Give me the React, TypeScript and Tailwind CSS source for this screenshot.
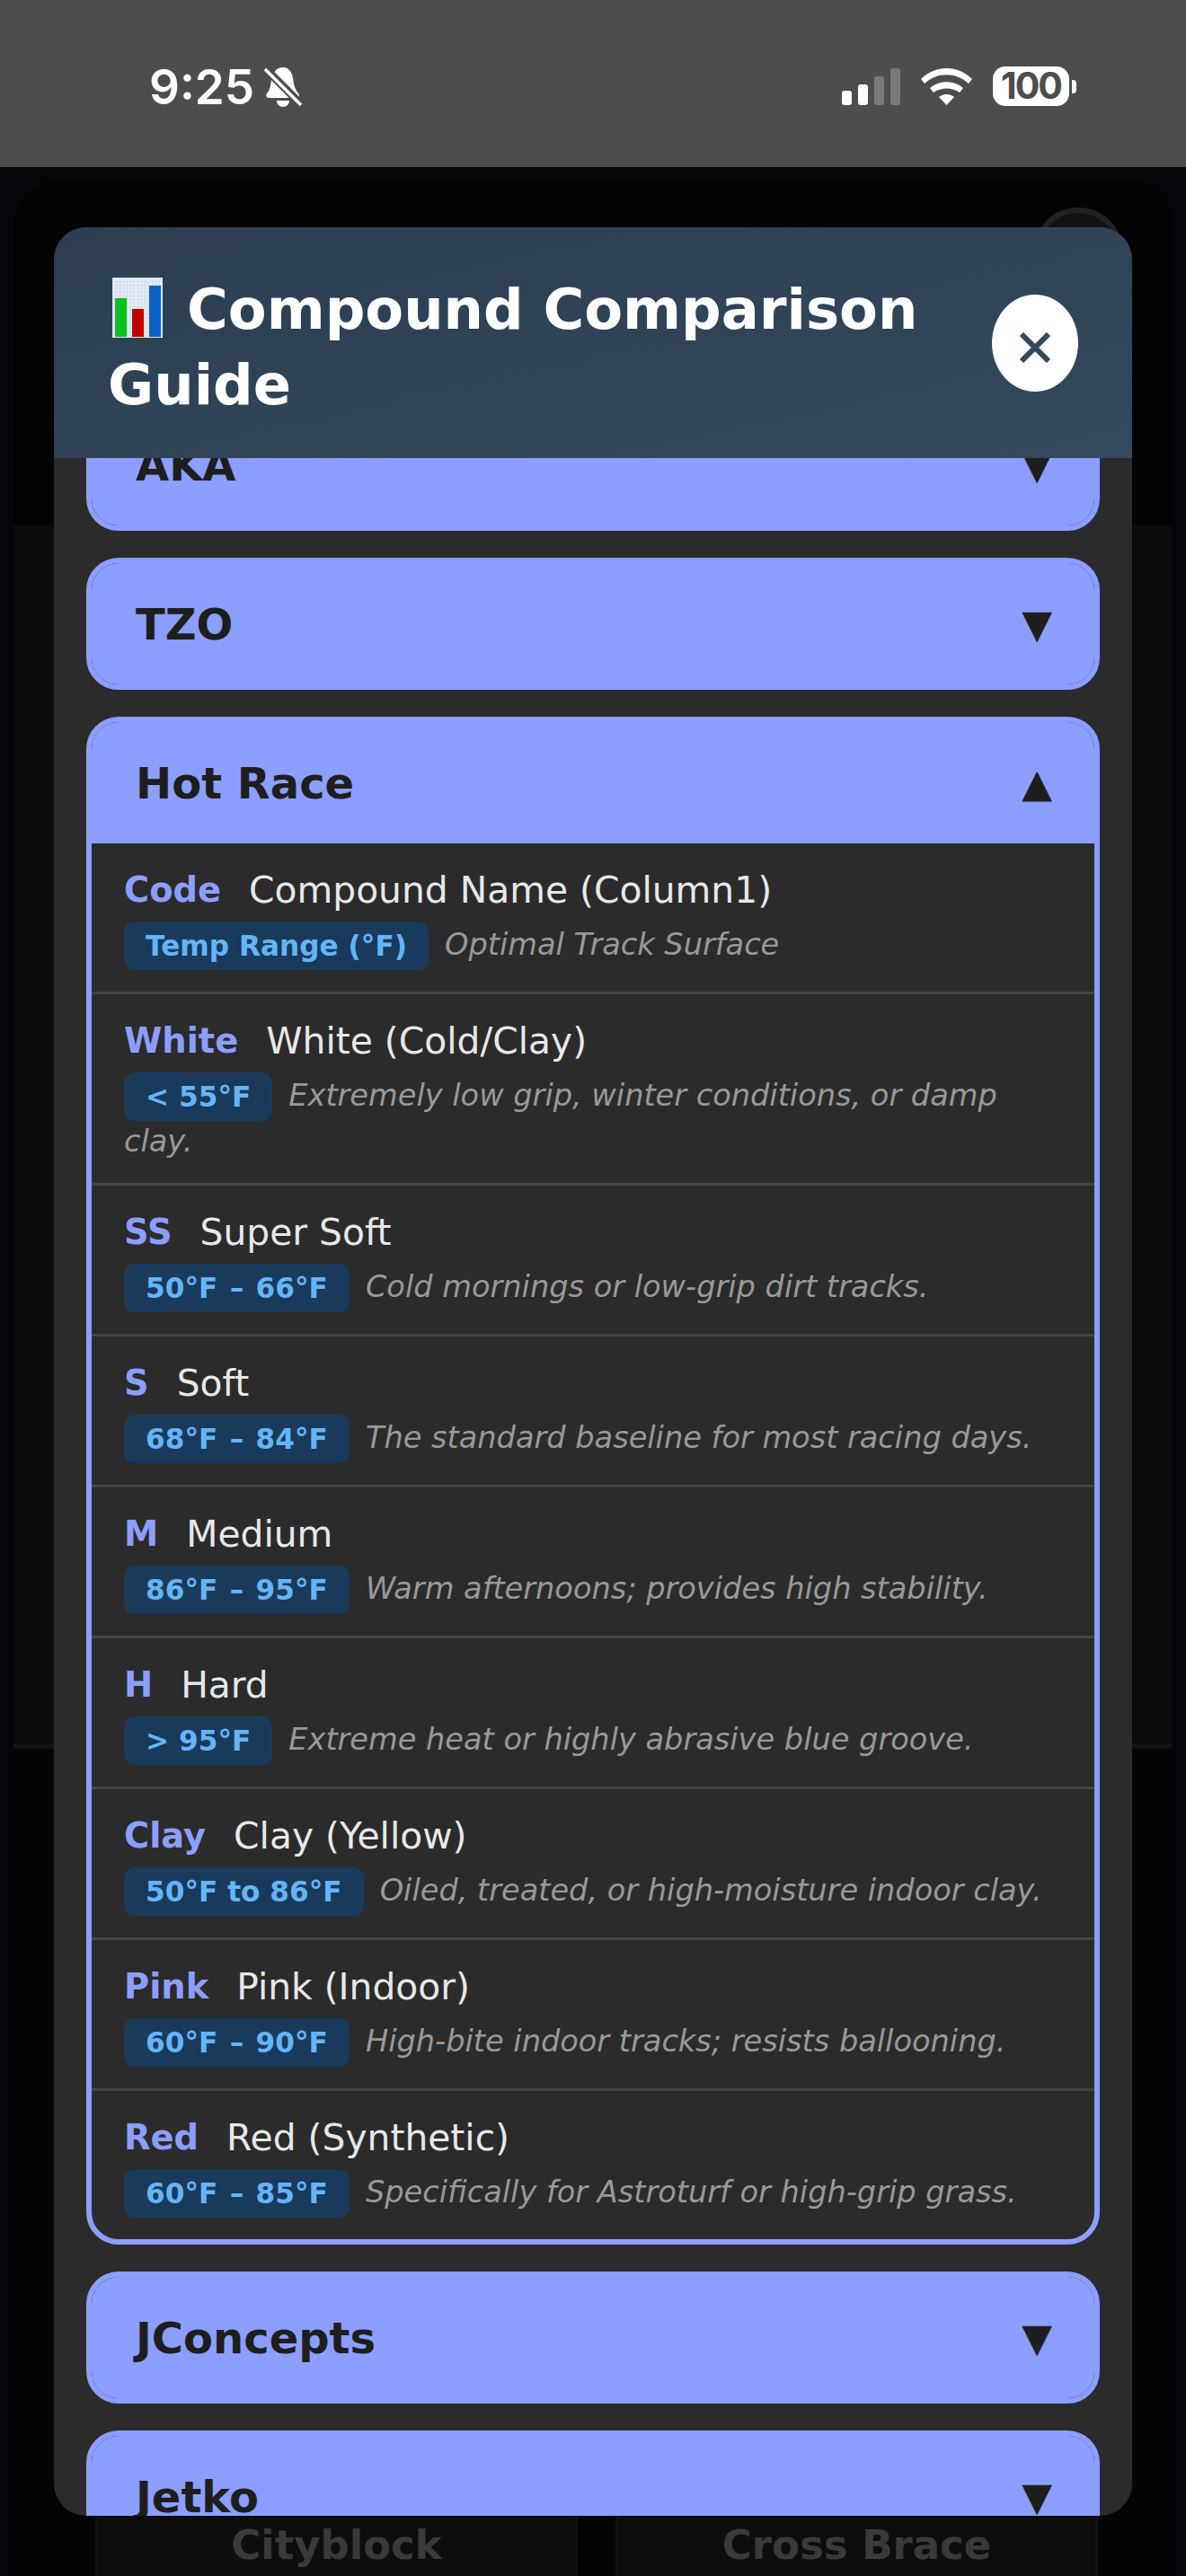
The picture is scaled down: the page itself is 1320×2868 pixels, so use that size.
const rows = [
  { code: 'Code', name: 'Compound Name (Column1)', temp: 'Temp Range (°F)', note: 'Optimal Track Surface' },
  { code: 'White', name: 'White (Cold/Clay)', temp: '< 55°F', note: 'Extremely low grip, winter conditions, or damp clay.' },
  { code: 'SS', name: 'Super Soft', temp: '50°F – 66°F', note: 'Cold mornings or low-grip dirt tracks.' },
  { code: 'S', name: 'Soft', temp: '68°F – 84°F', note: 'The standard baseline for most racing days.' },
  { code: 'M', name: 'Medium', temp: '86°F – 95°F', note: 'Warm afternoons; provides high stability.' },
  { code: 'H', name: 'Hard', temp: '> 95°F', note: 'Extreme heat or highly abrasive blue groove.' },
  { code: 'Clay', name: 'Clay (Yellow)', temp: '50°F to 86°F', note: 'Oiled, treated, or high-moisture indoor clay.' },
  { code: 'Pink', name: 'Pink (Indoor)', temp: '60°F – 90°F', note: 'High-bite indoor tracks; resists ballooning.' },
  { code: 'Red', name: 'Red (Synthetic)', temp: '60°F – 85°F', note: 'Specifically for Astroturf or high-grip grass.' },
]

function StatusBar() {
  return (
    <div className="flex h-[186px] shrink-0 items-start justify-between bg-[#4d4d4d] pl-[166px] pr-[122px] pt-[74px] text-white">
      <div className="flex items-center gap-[10px]">
        <span className="font-['Inter',sans-serif] text-[53px] font-semibold leading-[46px]">9:25</span>
        <svg width="44" height="46" viewBox="0 0 44 46" fill="white">
          <path d="M22 1c7 0 10 6 11 12 1 7 2 12 6 17 2 3 1 5-2 5H7c-3 0-5-2-3-5 4-4 4-9 5-15 1-8 6-14 13-14z" />
          <path d="M15 38h14c0 4-3 7-7 7s-7-3-7-7z" />
          <path d="M0 0 44 44" stroke="#4d4d4d" strokeWidth="9" />
          <path d="M2 3 42 43" stroke="white" strokeWidth="3.5" />
        </svg>
      </div>
      <div className="flex items-center">
        <div className="flex items-end gap-[7px]">
          <div className="h-[16px] w-[11px] rounded-[3px] bg-white" />
          <div className="h-[23px] w-[11px] rounded-[3px] bg-white" />
          <div className="h-[32px] w-[11px] rounded-[3px] bg-[#7a7a7a]" />
          <div className="h-[41px] w-[11px] rounded-[3px] bg-[#7a7a7a]" />
        </div>
        <svg className="ml-[23px]" width="57" height="42" viewBox="0 0 57 42" fill="white">
          <path d="M0 13C16-3 41-3 57 13l-4 5C39 5 18 5 4 18z" />
          <path d="M10 23c10-9 27-9 37 0l-4 5c-8-6-21-6-29 0z" />
          <path d="M20 33c5-4 12-4 17 0l-8.500 9z" />
        </svg>
        <div className="ml-[23px] flex h-[44px] w-[85px] items-center justify-center rounded-[14px] bg-white font-['Inter',sans-serif] text-[41px] font-bold tracking-[-2px] text-[#4d4d4d]">
          100
        </div>
        <div className="ml-[3px] h-[15px] w-[5px] rounded-r-[4px] bg-white" />
      </div>
    </div>
  )
}

function Backdrop() {
  return (
    <div className="flex min-h-0 flex-1 flex-col bg-[#05050a] px-[15px] pt-[14px]">
      <div className="flex flex-1 flex-col overflow-hidden rounded-t-[54px] bg-[#030303]">
        <div className="flex h-[385px] shrink-0 justify-end pr-[55px] pt-[31px]">
          <div className="h-[100px] w-[100px] rounded-full border-[6px] border-[#222222] bg-[#111111]" />
        </div>
        <div className="h-[1362px] shrink-0 border-b-[6px] border-[#131313] bg-[#0b0b0b]" />
        <div className="flex flex-1 items-end justify-between bg-[#050505] pl-[91px] pr-[83px]">
          <div className="flex h-[130px] w-[537px] items-start justify-center rounded-t-[24px] border-[3px] border-b-0 border-[#121212] bg-[#0d0d0d] pt-[63px] font-['DejaVu_Sans',sans-serif] text-[45px] font-bold leading-[60px] text-[#3a3a3a]">
            Cityblock
          </div>
          <div className="flex h-[130px] w-[537px] items-start justify-center rounded-t-[24px] border-[3px] border-b-0 border-[#121212] bg-[#0d0d0d] pt-[63px] font-['DejaVu_Sans',sans-serif] text-[45px] font-bold leading-[60px] text-[#3a3a3a]">
            Cross Brace
          </div>
        </div>
      </div>
    </div>
  )
}

function ChartIcon() {
  return (
    <svg className="ml-[5px] mr-[27px] inline-block align-[-10px]" width="56" height="67" viewBox="0 0 56 67">
      <defs>
        <pattern id="chart-grid" width="4" height="4" patternUnits="userSpaceOnUse">
          <rect width="4" height="4" fill="#e4ebf3" />
          <path d="M0 0H4M0 0V4" stroke="#c5d6ea" strokeWidth="1" />
        </pattern>
      </defs>
      <rect width="56" height="67" fill="url(#chart-grid)" />
      <rect x="3" y="23" width="13" height="43" fill="#0cc21f" />
      <rect x="22" y="35" width="13" height="31" fill="#c00000" />
      <rect x="41" y="9" width="13" height="57" fill="#0a62c9" />
    </svg>
  )
}

function BrandHead({ name, open }: { name: string; open?: boolean }) {
  return (
    <div className="flex h-[135px] items-center justify-between bg-[#8c9eff] pl-[49px] pr-[47px] text-[#1e1e1e]">
      <span className="text-[48px] font-bold leading-none">{name}</span>
      <span className="text-[44px] leading-none">{open ? '▲' : '▼'}</span>
    </div>
  )
}

function Brand({ name }: { name: string }) {
  return (
    <div className="shrink-0 overflow-hidden rounded-[36px] border-[6px] border-[#8c9eff] bg-[#2b2b2b]">
      <BrandHead name={name} />
    </div>
  )
}

function Compound({ code, name, temp, note, last }: { code: string; name: string; temp: string; note: string; last?: boolean }) {
  return (
    <div className={last ? 'px-[36px] pb-[24px] pt-[22px]' : 'border-b-[3px] border-[#444444] px-[36px] pb-[24px] pt-[22px]'}>
      <div className="mb-[4px] flex h-[61px] items-center gap-[31px] leading-none">
        <span className="text-[38.4px] font-bold text-[#8c9eff]">{code}</span>
        <span className="text-[40.8px] text-[#e8e8e8]">{name}</span>
      </div>
      <div className="text-[33.6px] italic leading-[45px] text-[#999999]">
        <span
          className={
            temp.includes('–')
              ? 'mr-[18px] inline-block h-[54px] rounded-[12px] bg-[#1a3a5c] px-[24px] align-middle text-[31.2px] font-bold not-italic leading-[54px] text-[#64b5f6] [word-spacing:2.5px]'
              : 'mr-[18px] inline-block h-[54px] rounded-[12px] bg-[#1a3a5c] px-[24px] align-middle text-[31.2px] font-bold not-italic leading-[54px] text-[#64b5f6]'
          }
        >
          {temp}
        </span>
        {note}
      </div>
    </div>
  )
}

export default function App() {
  return (
    <div className="relative flex h-[2868px] w-[1320px] flex-col overflow-hidden font-['DejaVu_Sans',sans-serif]">
      <StatusBar />
      <Backdrop />

      <div className="absolute left-[60px] top-[253px] flex h-[2548px] w-[1200px] flex-col overflow-hidden rounded-[36px] bg-[#2b2b2b]">
        <div className="relative z-10 flex h-[257px] shrink-0 items-center justify-between bg-gradient-to-br from-[#2c3e50] to-[#34495e] pl-[60px] pr-[60px]">
          <h2 className="w-[960px] pt-[10px] text-[62.4px] font-bold leading-[84px] text-white">
            <ChartIcon />
            Compound Comparison Guide
          </h2>
          <div className="flex h-[108px] w-[96px] shrink-0 items-center justify-center rounded-[50%] bg-white pt-[10px]">
            <svg width="34" height="34" viewBox="0 0 34 34" stroke="#34495e" strokeWidth="6" fill="none">
              <path d="M2 2 32 32M32 2 2 32" />
            </svg>
          </div>
        </div>

        <div className="mt-[-66px] flex flex-col gap-[30px] px-[36px]">
          <Brand name="AKA" />
          <Brand name="TZO" />
          <div className="shrink-0 overflow-hidden rounded-[36px] border-[6px] border-[#8c9eff] bg-[#2b2b2b]">
            <BrandHead name="Hot Race" open />
            {rows.map((r, i) => (
              <Compound key={r.code} {...r} last={i === rows.length - 1} />
            ))}
          </div>
          <Brand name="JConcepts" />
          <Brand name="Jetko" />
        </div>
      </div>
    </div>
  )
}
